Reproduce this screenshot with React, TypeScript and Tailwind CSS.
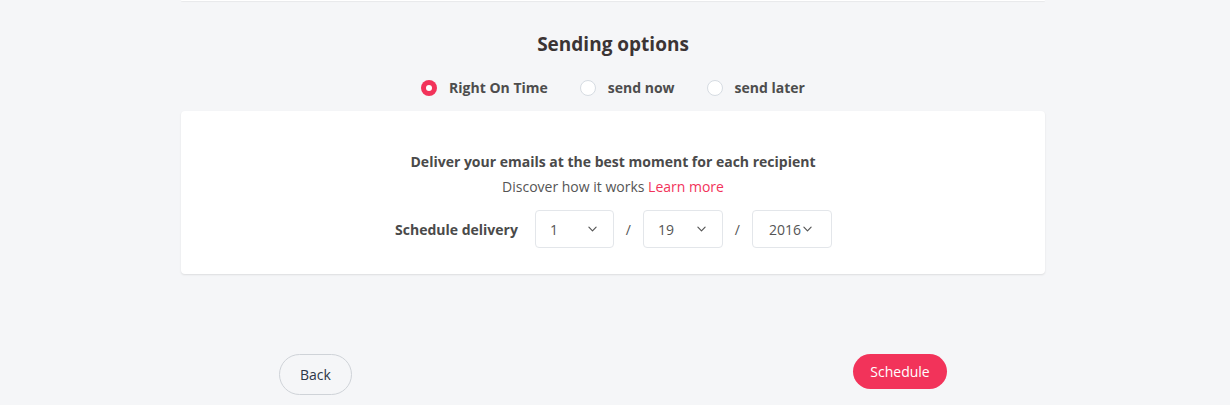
import { useState } from "react";

type Mode = "rot" | "now" | "later";

const OPTIONS: { id: Mode; label: string }[] = [
  { id: "rot", label: "Right On Time" },
  { id: "now", label: "send now" },
  { id: "later", label: "send later" },
];

function Chevron() {
  return (
    <svg viewBox="0 0 10 6" className="h-[6px] w-[9px] shrink-0" fill="none" aria-hidden="true">
      <path d="M1 1l4 4 4-4" stroke="#555" strokeWidth="1.3" strokeLinecap="round" strokeLinejoin="round" />
    </svg>
  );
}

function DateSelect({ value, width }: { value: string; width: string }) {
  return (
    <button
      type="button"
      className={`flex h-[38px] ${width} items-center rounded border border-[#e3e6ea] bg-white pl-[14px] pr-[16px] text-[14px] text-[#555]`}
    >
      <span className="flex-1 text-left">{value}</span>
      <Chevron />
    </button>
  );
}

export default function App() {
  const [mode, setMode] = useState<Mode>("rot");

  return (
    <div
      className="min-h-[405px] w-full bg-[#f5f6f8] text-[#555]"
      style={{ fontFamily: '"Open Sans", "Noto Sans", sans-serif' }}
    >
      <div className="ml-[181px] w-[864px]">
        {/* bottom edge of the card above */}
        <div className="h-[1px] rounded-b bg-white shadow-[0_1px_1px_rgba(0,0,0,0.06)]" />

        <h2 className="mt-[32px] text-center text-[19px] font-bold leading-[22px] text-[#3b3434]">
          Sending options
        </h2>

        <div className="mt-[24px] flex items-center justify-center gap-[32px]">
          {OPTIONS.map((o) => {
            const active = mode === o.id;
            return (
              <label
                key={o.id}
                onClick={() => setMode(o.id)}
                className="flex cursor-pointer items-center gap-[12px] text-[14px] font-bold leading-[18px] text-[#4d4d4d]"
              >
                {active ? (
                  <span className="flex h-[16px] w-[16px] items-center justify-center rounded-full bg-[#f2335a]">
                    <span className="h-[6px] w-[6px] rounded-full bg-white" />
                  </span>
                ) : (
                  <span className="h-[16px] w-[16px] rounded-full border border-[#d6dce2] bg-white" />
                )}
                {o.label}
              </label>
            );
          })}
        </div>

        <div className="mt-[14px] flex h-[163px] flex-col items-center rounded bg-white pt-[42px] shadow-[0_1px_2px_rgba(0,0,0,0.1)]">
          <p className="text-[14px] font-bold leading-[18px] text-[#4a4a4a]">
            Deliver your emails at the best moment for each recipient
          </p>
          <p className="mt-[7px] text-[14px] leading-[18px] text-[#555]">
            Discover how it works <a className="text-[#f2335a]">Learn more</a>
          </p>
          <div className="mt-[14px] flex items-center text-[14px] text-[#555]">
            <span className="mr-[17px] ml-[1px] font-bold text-[#4a4a4a]">Schedule delivery</span>
            <DateSelect value="1" width="w-[79px]" />
            <span className="w-[29px] text-center">/</span>
            <DateSelect value="19" width="w-[80px]" />
            <span className="w-[29px] text-center">/</span>
            <div className="flex h-[38px] w-[80px] items-center rounded border border-[#e3e6ea] bg-white pl-[16px] text-[14px] text-[#555]">
              <span>2016</span>
              <span className="ml-[2px]">
                <Chevron />
              </span>
            </div>
          </div>
        </div>

        <div className="mt-[80px] flex items-start justify-between px-[98px]">
          <button
            type="button"
            className="h-[41px] w-[73px] rounded-full border border-[#cfd3d8] bg-transparent text-[14px] text-[#2d3748]"
          >
            Back
          </button>
          <button
            type="button"
            className="h-[35px] w-[94px] rounded-full bg-[#f2335a] text-[14px] text-white"
          >
            Schedule
          </button>
        </div>
      </div>
    </div>
  );
}
